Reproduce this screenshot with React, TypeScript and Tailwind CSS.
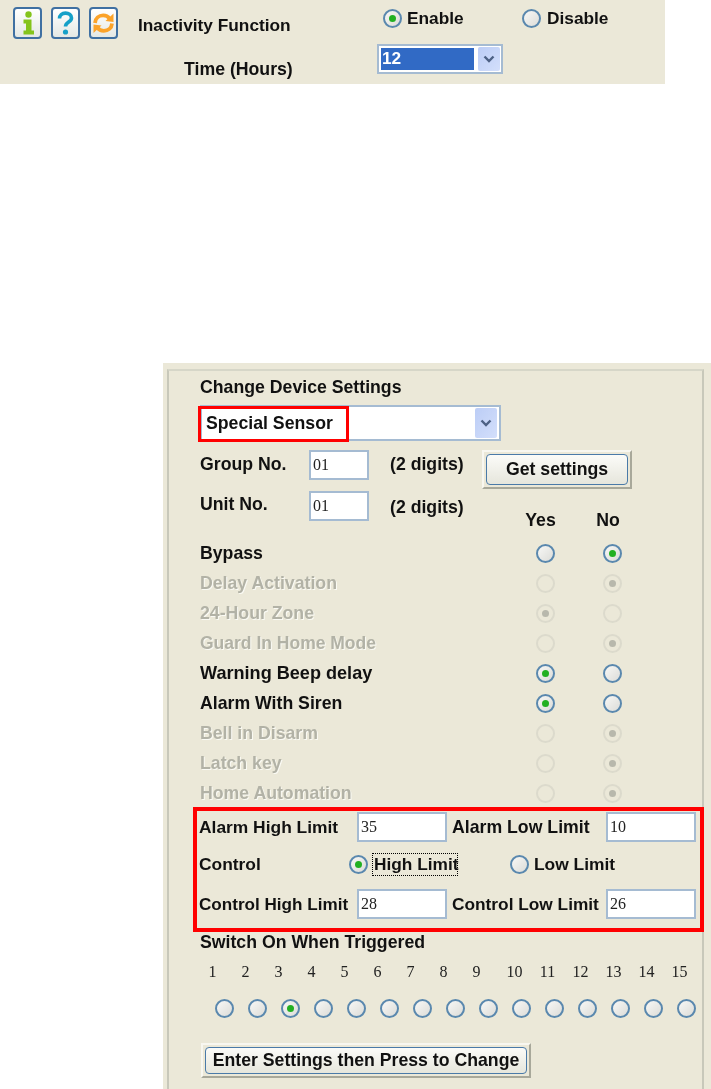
import React from "react";

function Radio({ on = false, off = false }: { on?: boolean; off?: boolean }) {
  if (off) {
    return (
      <span className="flex h-[19px] w-[19px] shrink-0 items-center justify-center rounded-full border-2 border-[#dcdacc] bg-[#ebe8d8]">
        {on && <span className="h-[7px] w-[7px] rounded-full bg-[#b8b8ac]" />}
      </span>
    );
  }
  return (
    <span className="flex h-[19px] w-[19px] shrink-0 items-center justify-center rounded-full border-2 border-[#5a88ae] bg-gradient-to-br from-[#f8f8f6] to-[#dcdcd8]">
      {on && <span className="h-[7px] w-[7px] rounded-full bg-[#22b022]" />}
    </span>
  );
}

function Input({ value, w = "w-[90px]" }: { value: string; w?: string }) {
  return (
    <div className={`flex h-[30px] shrink-0 items-center border-2 border-[#a5bbd2] bg-white pb-[1px] pl-[2px] font-['Liberation_Serif',serif] text-[16px] font-normal text-[#222] ${w}`}>
      {value}
    </div>
  );
}

function Chevron() {
  return (
    <svg width="12" height="8" viewBox="0 0 12 8" fill="none">
      <path d="M1.5 1.5 L6 6 L10.5 1.5" stroke="#4d6185" strokeWidth="2.4" />
    </svg>
  );
}

function SelectArrow({ h }: { h: string }) {
  return (
    <div className={`flex w-[22px] shrink-0 items-center justify-center rounded-[2px] bg-gradient-to-br from-[#bccdf6] to-[#d3dffb] ${h}`}>
      <Chevron />
    </div>
  );
}

function Button({ label, w, h }: { label: string; w: string; h: string }) {
  return (
    <div className={`flex shrink-0 border-[2px] border-b-[#a8a89a] border-l-[#f8f7f0] border-r-[#a8a89a] border-t-[#f8f7f0] bg-[#ebe8d8] p-[2px] ${w} ${h}`}>
      <div className="flex flex-1 items-center justify-center whitespace-nowrap rounded-[4px] border-[1.5px] border-[#4a7aa8] bg-gradient-to-b from-[#fbfbf8] to-[#e6e6dc] text-[17.7px] font-bold text-[#111]">
        {label}
      </div>
    </div>
  );
}

function IconFrame({ children }: { children: React.ReactNode }) {
  return (
    <div className="h-[32px] w-[29px] shrink-0 rounded-[4px] border-2 border-[#3f70a2] bg-gradient-to-b from-[#ffffff] to-[#e4e8e4]">
      {children}
    </div>
  );
}

const rows: [string, boolean, "yes" | "no"][] = [
  ["Bypass", true, "no"],
  ["Delay Activation", false, "no"],
  ["24-Hour Zone", false, "yes"],
  ["Guard In Home Mode", false, "no"],
  ["Warning Beep delay", true, "yes"],
  ["Alarm With Siren", true, "yes"],
  ["Bell in Disarm", false, "no"],
  ["Latch key", false, "no"],
  ["Home Automation", false, "no"],
];

const nums = [1, 2, 3, 4, 5, 6, 7, 8, 9, 10, 11, 12, 13, 14, 15];

export default function App() {
  return (
    <div className="h-[1089px] w-[711px] overflow-hidden bg-white font-['Liberation_Sans',Arial,sans-serif] text-[17.7px] font-bold leading-none text-[#111] blur-[0.35px]">
      {/* top band */}
      <div className="flex h-[84px] w-[665px] bg-[#ebe8d8] text-[17.3px]">
        <div className="ml-[13px] mt-[7px] flex h-[32px] gap-[9px]">
          <IconFrame>
            <svg width="25" height="28" viewBox="0 0 25 28">
              <circle cx="13.5" cy="5.5" r="3.2" fill="#84c41c" />
              <path d="M8.5 10.5h8v11h2.5v4H8.5v-4h2.5v-7H8.5z" fill="#84c41c" />
            </svg>
          </IconFrame>
          <IconFrame>
            <svg width="25" height="28" viewBox="0 0 25 28" fill="none">
              <path d="M6.5 9.5c0-3.4 2.6-5.4 6-5.4s6 2 6 4.8c0 4.2-6 4-6 8.6" stroke="#15a0c8" strokeWidth="3.6" />
              <circle cx="12.5" cy="23" r="2.6" fill="#15a0c8" />
            </svg>
          </IconFrame>
          <IconFrame>
            <svg width="25" height="28" viewBox="0 0 25 28" fill="none">
              <path d="M4 14c.4-4.6 3.8-7.6 8.2-7.6 2.8 0 5 1.2 6.4 3.2" stroke="#fba32a" strokeWidth="3.8" />
              <path d="M14.5 12 22.5 13 22.5 4.5z" fill="#fba32a" />
              <path d="M21 14.5c-.4 4.6-3.8 7.4-8.2 7.4-2.8 0-5-1.2-6.4-3.2" stroke="#fba32a" strokeWidth="3.8" />
              <path d="M10.5 16.5 2.5 15.5 2.5 24z" fill="#fba32a" />
            </svg>
          </IconFrame>
        </div>
        <div className="ml-[20px] flex w-[239px] flex-col">
          <div className="mt-[17px] h-[16px] whitespace-nowrap">Inactivity Function</div>
          <div className="ml-[46px] mt-[28px] h-[16px] whitespace-nowrap text-[17.7px]">Time (Hours)</div>
        </div>
        <div className="flex flex-col">
          <div className="mt-[9px] flex h-[19px] items-center">
            <span className="ml-[6px]"><Radio on /></span>
            <span className="ml-[5px] w-[115px]">Enable</span>
            <Radio />
            <span className="ml-[6px]">Disable</span>
          </div>
          <div className="mt-[16px] flex h-[30px] w-[126px] items-center border-2 border-[#a5bbd2] bg-white pl-[2px]">
            <div className="flex h-[22px] w-[93px] items-center bg-[#316ac5] pl-[1px] text-white">12</div>
            <div className="ml-[4px]"><SelectArrow h="h-[24px]" /></div>
          </div>
        </div>
      </div>

      {/* device panel */}
      <div className="ml-[163px] mt-[279px] h-[726px] w-[548px] bg-[#ebe8d8] pl-[4px] pt-[6px]">
        <div className="h-[720px] w-[537px] border-b-0 border-l-2 border-r-2 border-t-2 border-b-transparent border-l-[#c8c8ba] border-r-[#c8c8ba] border-t-[#d6d6c8] pl-[31px]">
          <div className="mt-[7px] flex h-[20px] items-center">Change Device Settings</div>

          <div className="relative mt-[7px] flex h-[36px] w-[301px] items-center justify-end border-2 border-[#a5bbd2] bg-white pr-[2px]">
            <SelectArrow h="h-[30px]" />
            <div className="absolute -left-[4px] -top-[1px] flex h-[36px] w-[151px] items-center whitespace-nowrap border-[3px] border-[#ff0000] pl-[5px]">Special Sensor</div>
          </div>

          <div className="mt-[9px] flex h-[88px]">
            <div className="w-[282px]">
              <div className="flex h-[30px] items-center">
                <span className="w-[109px]">Group No.</span>
                <Input value="01" w="w-[60px]" />
                <span className="ml-[21px]">(2 digits)</span>
              </div>
              <div className="mt-[11px] flex h-[30px] items-center">
                <span className="w-[109px] pb-[2px]">Unit No.</span>
                <Input value="01" w="w-[60px]" />
                <span className="ml-[21px] pt-[4px]">(2 digits)</span>
              </div>
            </div>
            <div>
              <Button label="Get settings" w="w-[150px]" h="h-[39px]" />
              <div className="ml-[25px] mt-[23px] flex h-[16px]">
                <span className="w-[67px] text-center">Yes</span>
                <span className="w-[68px] text-center">No</span>
              </div>
            </div>
          </div>

          {rows.map(([label, active, sel]) => (
            <div key={label} className="flex h-[30px] items-center">
              <span className={`w-[336px] pt-[1px] ${active ? "" : "text-[#b2b2a6] [text-shadow:1px_1px_0_#fafaf4]"} ${label === "Warning Beep delay" ? "text-[18.1px]" : ""} ${label === "Guard In Home Mode" ? "text-[17.5px]" : ""}`}>{label}</span>
              <Radio on={sel === "yes"} off={!active} />
              <span className="ml-[48px]"><Radio on={sel === "no"} off={!active} /></span>
            </div>
          ))}

          <div className="-ml-[7px] -mt-[1px] h-[125px] w-[511px] border-4 border-[#ff0000] pl-[2px] text-[17.4px]">
            <div className="mt-[1px] flex h-[30px] items-center">
              <span className="w-[158px] pt-[1px]">Alarm High Limit</span>
              <Input value="35" />
              <span className="ml-[5px] w-[154px] pt-[1px] text-[17.7px]">Alarm Low Limit</span>
              <Input value="10" />
            </div>
            <div className="mt-[11px] flex h-[23px] items-center">
              <span className="w-[150px]">Control</span>
              <Radio on />
              <span className="ml-[4px] flex h-[23px] w-[86px] items-center whitespace-nowrap border border-dotted border-black pl-[1px] text-[17.3px]">High Limit</span>
              <span className="ml-[52px]"><Radio /></span>
              <span className="ml-[5px]">Low Limit</span>
            </div>
            <div className="mt-[13px] flex h-[30px] items-center">
              <span className="w-[158px] whitespace-nowrap pt-[1px] text-[17.1px]">Control High Limit</span>
              <Input value="28" />
              <span className="ml-[5px] w-[154px] whitespace-nowrap pt-[1px] text-[17.3px]">Control Low Limit</span>
              <Input value="26" />
            </div>
          </div>

          <div className="mt-[1px] flex h-[20px] items-center">Switch On When Triggered</div>

          <div className="-ml-[4px] mt-[9px] flex h-[20px] font-['Liberation_Serif',serif] text-[16px] font-normal text-[#222]">
            {nums.map((n) => (
              <span key={n} className={`flex w-[33px] items-center justify-center ${n === 10 ? "ml-[5px]" : ""}`}>{n}</span>
            ))}
          </div>

          <div className="ml-[15px] mt-[17px] flex gap-[14px]">
            {nums.map((n) => (
              <Radio key={n} on={n === 3} />
            ))}
          </div>

          <div className="ml-[1px] mt-[25px]">
            <Button label="Enter Settings then Press to Change" w="w-[330px]" h="h-[35px]" />
          </div>
        </div>
      </div>
    </div>
  );
}
